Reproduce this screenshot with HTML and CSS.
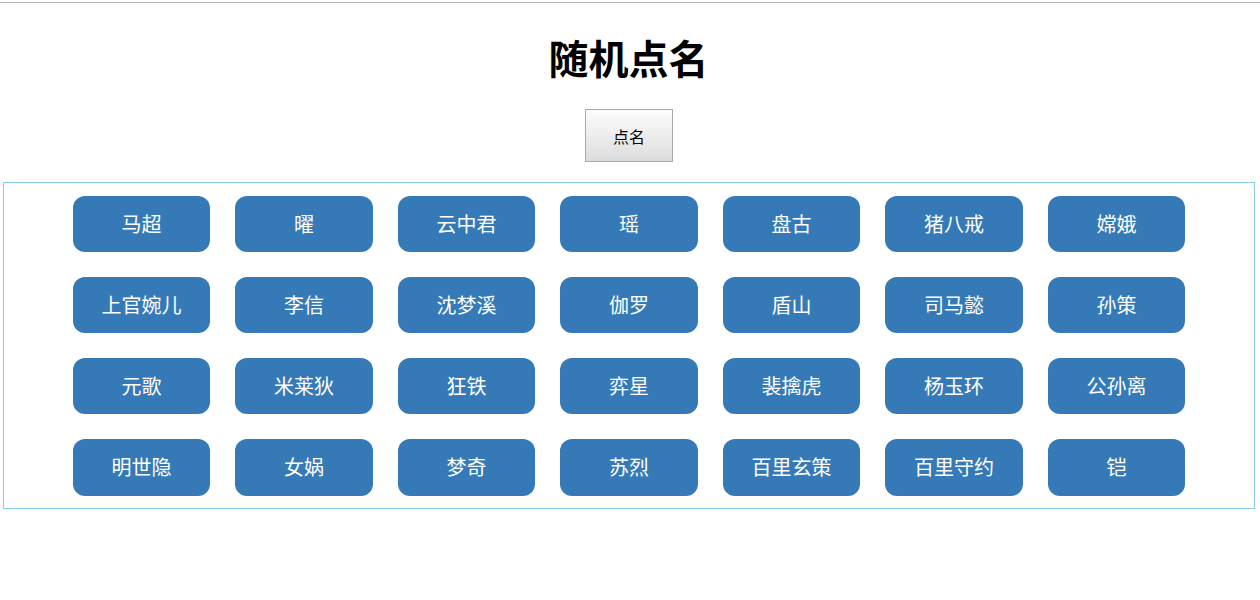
FILE: index.html
```html
<!DOCTYPE html>
<html lang="zh-CN">
<head>
<meta charset="utf-8">
<title>随机点名</title>
<link rel="stylesheet" href="styles.css">
</head>
<body>
<div class="topline"></div>
<h1 class="title">随机点名</h1>
<div class="actions"><button class="call-btn">点名</button></div>
<div class="board">
  <div class="name">马超</div><div class="name">曜</div><div class="name">云中君</div><div class="name">瑶</div><div class="name">盘古</div><div class="name">猪八戒</div><div class="name">嫦娥</div>
  <div class="name">上官婉儿</div><div class="name">李信</div><div class="name">沈梦溪</div><div class="name">伽罗</div><div class="name">盾山</div><div class="name">司马懿</div><div class="name">孙策</div>
  <div class="name">元歌</div><div class="name">米莱狄</div><div class="name">狂铁</div><div class="name">弈星</div><div class="name">裴擒虎</div><div class="name">杨玉环</div><div class="name">公孙离</div>
  <div class="name">明世隐</div><div class="name">女娲</div><div class="name">梦奇</div><div class="name">苏烈</div><div class="name">百里玄策</div><div class="name">百里守约</div><div class="name">铠</div>
</div>
</body>
</html>
```
FILE: styles.css
```css
html, body {
  margin: 0;
  padding: 0;
  background: #fff;
  font-family: "Noto Sans CJK SC", "Liberation Sans", sans-serif;
}
.topline {
  height: 2px;
  border-bottom: 1px solid #b4b4b4;
}
.title {
  margin: 28px 0 0;
  padding-right: 3px;
  text-align: center;
  font-size: 40px;
  line-height: 52px;
  font-weight: 700;
  color: #000;
}
.actions {
  display: flex;
  justify-content: center;
  margin-top: 26px;
  padding-right: 2px;
}
.call-btn {
  width: 88px;
  height: 53px;
  border: 1px solid #a9a9a9;
  background: linear-gradient(#fdfdfd, #dcdcdc);
  font-family: "Noto Sans CJK SC", sans-serif;
  font-size: 16px;
  color: #000;
  padding: 0;
}
.board {
  margin: 20px 5px 0 3px;
  border: 1px solid #87ceeb;
  display: flex;
  flex-wrap: wrap;
  justify-content: center;
}
.name {
  width: 11%;
  margin: 1%;
  height: 56.3px;
  line-height: 56px;
  background: #357ab7;
  border-radius: 12px;
  color: #fff;
  font-size: 20px;
  text-align: center;
}
```
